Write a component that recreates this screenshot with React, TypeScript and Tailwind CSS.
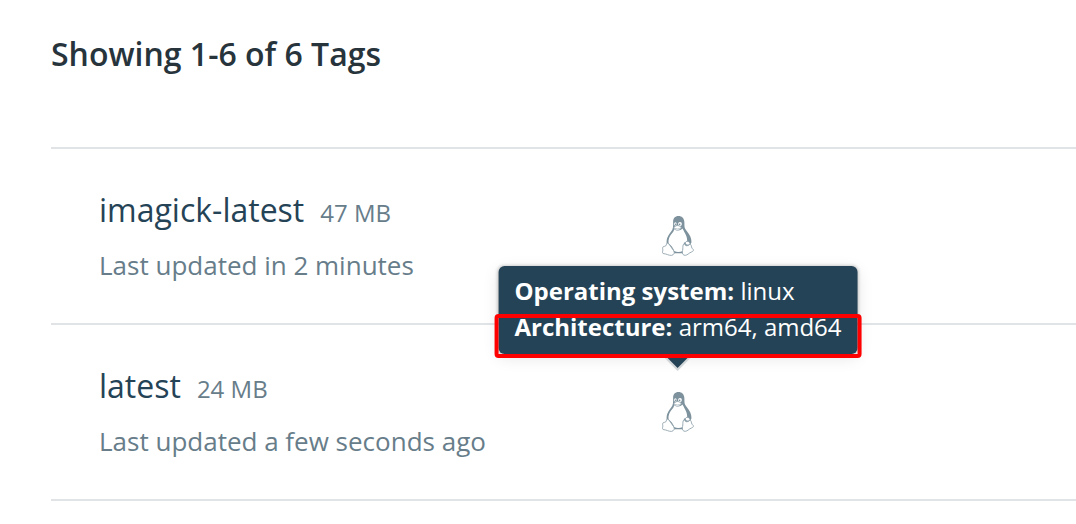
import React from "react";

type Tag = {
  name: string;
  size: string;
  updated: string;
  os: string;
  architectures: string[];
  tooltipOpen: boolean;
};

const tags: Tag[] = [
  {
    name: "imagick-latest",
    size: "47 MB",
    updated: "Last updated in 2 minutes",
    os: "linux",
    architectures: ["amd64"],
    tooltipOpen: false,
  },
  {
    name: "latest",
    size: "24 MB",
    updated: "Last updated a few seconds ago",
    os: "linux",
    architectures: ["arm64", "amd64"],
    tooltipOpen: true,
  },
];

function LinuxIcon() {
  return (
    <svg viewBox="0 0 32 40" className="block h-10 w-8" aria-hidden="true">
      {/* head, back and flippers */}
      <path
        fill="#7d929d"
        d="M16.5 0C13 0 11.1 2.3 11.1 5.8c0 3 .3 5.300-.7 7.600C9.300 15.800 6.500 18.300 5.200 22c-.7 2-.7 4.200-.5 6.500l7.300 8.800h9.800l7.600-10.500c.2-2.300-.3-4.300-1.200-6.600-1.300-3.300-4.600-5.700-5.400-8.200-.6-2.100-.2-4.300-.5-6.500C21.900 2.200 19.900 0 16.500 0Z"
      />
      {/* belly */}
      <path
        fill="#fff"
        d="M12.300 13.300c-.6 3-4 5.300-5.300 9.100-.7 2-.6 3.600-.2 5 2.300 2 4.400 4.200 5.400 7.700 2.600 1.300 6 1.200 8.700-.2l1-8.200 3.300-1.300c.3-5-2.500-8.600-4.700-13-1.500 1.900-5.800 2.700-8.200.9Z"
      />
      {/* eyes */}
      <ellipse cx="13.4" cy="8" rx="1.300" ry="1.800" fill="#fff" />
      <ellipse cx="18" cy="8" rx="1.900" ry="2" fill="#fff" />
      <circle cx="13.700" cy="8.200" r=".7" fill="#6b838f" />
      <circle cx="17.700" cy="8.200" r=".8" fill="#6b838f" />
      {/* beak */}
      <path
        fill="#fff"
        stroke="#9aabb4"
        strokeWidth=".7"
        d="M11.800 11.200c1.300-.5 2.300-1.700 3.600-1.700s2.500.9 3.800 1.500c.3 1.600-2 3.200-3.800 3.400-1.700 0-3.300-1.500-3.600-3.200Z"
      />
      <path fill="none" stroke="#9aabb4" strokeWidth=".7" d="M12.300 12c2 1.300 4.500 1.300 6.700 0" />
      {/* feet */}
      <path
        fill="#fff"
        stroke="#91a3ad"
        strokeWidth=".9"
        strokeLinejoin="round"
        d="M5.300 27.100c1.500.2 2.300 1.900 3.200 3.200l3.200 4.400c1.200 2.100.3 4.300-2.300 4.700-2.500.2-4.600-1.500-8.300-1.900-1-.4-.5-1.900-.3-3.200 0-1.500-.6-2.700.3-3.500.8-.6 2.100-.3 2.700-1 .7-.8.6-2.400 1.500-2.700Z"
      />
      <path
        fill="#fff"
        stroke="#91a3ad"
        strokeWidth=".9"
        strokeLinejoin="round"
        d="M22.100 27.900c1.200.2.8 1.500 2.200 1.800 1.700.2 2.800-.8 3.500-1.700 1.700.2 1.400 2.800 2.100 4 .6 1 1.700 1.400 1.600 2.300-.3 1.400-3.500 2-5.300 3.700-1.700 1.500-4.200 1.900-5.400.2-.9-1.300-.2-3.300 0-5.200.2-1.800-.3-4.400 1.300-5.100Z"
      />
      {/* flipper tip */}
      <path
        fill="#fff"
        stroke="#8a9da8"
        strokeWidth=".8"
        d="M23.500 27.500c-.3-1.500.8-2.400 2.200-2.100 1.500.3 2.400 1.200 2.300 2.700-.9 1.100-3.400 1.500-4.500-.6Z"
      />
    </svg>
  );
}

function Tooltip({ tag }: { tag: Tag }) {
  return (
    <div
      role="tooltip"
      className="absolute right-1/2 bottom-full mb-[38px] translate-x-1/2 rounded-md bg-[#254356] px-4 pt-[7px] pb-[9px] text-2xl leading-9 whitespace-nowrap text-white shadow-[0_0_3px_1px_rgba(0,0,0,0.16),0_4px_16px_rgba(0,0,0,0.1)]"
    >
      <svg
        viewBox="0 0 34 17"
        className="absolute top-full left-1/2 h-[17px] w-[34px] -translate-x-1/2"
        aria-hidden="true"
      >
        <path d="M0 0h34L17 17Z" fill="#d3d7da" />
        <path d="M3 0h28L17 14Z" fill="#254356" />
      </svg>
      <p>
        <strong className="font-bold">Operating system:</strong> {tag.os}
      </p>
      <p>
        <strong className="font-bold">Architecture:</strong> {tag.architectures.join(", ")}
      </p>
      <div className="absolute -inset-x-1 top-12 -bottom-1 rounded-sm border-4 border-[#ff0000]" />
    </div>
  );
}

function TagRow({ tag }: { tag: Tag }) {
  return (
    <li className="grid grid-cols-[563px_1fr] items-center border-b-2 border-[#e0e4e7] py-8 pl-12">
      <div>
        <div className="flex items-baseline gap-4">
          <h2 className="text-[32px] leading-[58px] text-[#254356]">{tag.name}</h2>
          <span className="text-2xl text-[#677d8a]">{tag.size}</span>
        </div>
        <p className="text-[26px] leading-[52px] text-[#677d8a]">{tag.updated}</p>
      </div>
      <div className="relative w-8">
        <LinuxIcon />
        {tag.tooltipOpen && <Tooltip tag={tag} />}
      </div>
    </li>
  );
}

export default function App() {
  return (
    <main className="min-h-screen bg-white pl-[51px] font-['Open_Sans',sans-serif]">
      <h1 className="pt-8 pb-[71px] text-[32px] leading-[44px] font-semibold text-[#27343c]">
        Showing 1-6 of 6 Tags
      </h1>
      <ul className="border-t-2 border-[#e0e4e7]">
        {tags.map((tag) => (
          <TagRow key={tag.name} tag={tag} />
        ))}
      </ul>
    </main>
  );
}
